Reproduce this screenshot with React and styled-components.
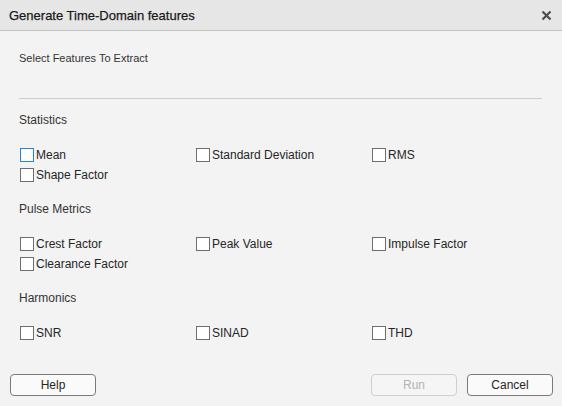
import { useState } from "react";
import styled, { createGlobalStyle } from "styled-components";

const sections = [
  {
    title: "Statistics",
    items: ["Mean", "Standard Deviation", "RMS", "Shape Factor"],
  },
  {
    title: "Pulse Metrics",
    items: ["Crest Factor", "Peak Value", "Impulse Factor", "Clearance Factor"],
  },
  {
    title: "Harmonics",
    items: ["SNR", "SINAD", "THD"],
  },
];

export default function App() {
  const [checked, setChecked] = useState({});
  const toggle = (name) => setChecked({ ...checked, [name]: !checked[name] });
  const anyChecked = Object.values(checked).some(Boolean);

  return (
    <>
      <GlobalStyle />
      <Window>
        <TitleBar>
          <Title>Generate Time-Domain features</Title>
          <CloseButton aria-label="Close">
            <svg width="11" height="11" viewBox="0 0 11 11">
              <path d="M1.5 1.5 L9.5 9.5 M9.5 1.5 L1.5 9.5" stroke="#4d4d4d" strokeWidth="2.2" />
            </svg>
          </CloseButton>
        </TitleBar>

        <Content>
          <Prompt>Select Features To Extract</Prompt>
          <Divider />

          {sections.map((section) => (
            <Section key={section.title}>
              <SectionTitle>{section.title}</SectionTitle>
              <Grid>
                {section.items.map((item) => (
                  <Option key={item}>
                    <Box
                      $focused={item === "Mean"}
                      onClick={() => toggle(item)}
                    >
                      {checked[item] && (
                        <svg width="9" height="9" viewBox="0 0 9 9">
                          <path d="M1 4.5 L3.5 7 L8 1.5" stroke="#333" strokeWidth="1.5" fill="none" />
                        </svg>
                      )}
                    </Box>
                    <OptionLabel onClick={() => toggle(item)}>{item}</OptionLabel>
                  </Option>
                ))}
              </Grid>
            </Section>
          ))}
        </Content>

        <Footer>
          <Button type="button">Help</Button>
          <FooterRight>
            <Button type="button" disabled={!anyChecked}>Run</Button>
            <Button type="button">Cancel</Button>
          </FooterRight>
        </Footer>
      </Window>
    </>
  );
}

// ─── Styled Components ───────────────────────────────────────

const GlobalStyle = createGlobalStyle`
  html, body {
    margin: 0;
    padding: 0;
    background: #f3f3f3;
  }
  body {
    font-family: "Liberation Sans", Arial, sans-serif;
  }
`;

const Window = styled.div`
  width: 562px;
  height: 406px;
  display: flex;
  flex-direction: column;
  background: #f3f3f3;
  color: #262626;
  box-sizing: border-box;
  overflow: hidden;
`;

const TitleBar = styled.div`
  height: 30px;
  flex-shrink: 0;
  display: flex;
  align-items: center;
  justify-content: space-between;
  padding: 0 8px 0 9px;
  background: #e6e6e6;
  border-bottom: 1px solid #c2c2c2;
`;

const Title = styled.span`
  font-size: 13px;
  color: #1a1a1a;
  -webkit-text-stroke: 0.25px #1a1a1a;
`;

const CloseButton = styled.button`
  display: flex;
  align-items: center;
  justify-content: center;
  width: 16px;
  height: 16px;
  padding: 0;
  margin-top: 1px;
  border: none;
  background: none;
  cursor: pointer;
`;

const Content = styled.div`
  padding: 19px 19px 0 19px;
  display: flex;
  flex-direction: column;
`;

const Prompt = styled.div`
  font-size: 11px;
  line-height: 16px;
  color: #333;
`;

const Divider = styled.div`
  height: 1px;
  margin: 32px 1px 13px 0;
  background: #cccccc;
`;

const Section = styled.div`
  display: flex;
  flex-direction: column;
  gap: 17px;
  margin-bottom: 16px;
`;

const SectionTitle = styled.div`
  font-size: 12px;
  line-height: 16px;
  color: #333;
`;

const Grid = styled.div`
  display: grid;
  grid-template-columns: 176px 176px 176px;
  grid-auto-rows: 20px;
  padding-left: 1px;
`;

const Option = styled.label`
  display: flex;
  align-items: center;
  gap: 2px;
  font-size: 12px;
  color: #262626;
  cursor: default;
`;

const Box = styled.span`
  width: 14px;
  height: 14px;
  box-sizing: border-box;
  flex-shrink: 0;
  display: flex;
  align-items: center;
  justify-content: center;
  background: #ffffff;
  border: 1px solid ${(p) => (p.$focused ? "#1f87e5" : "#6e6e6e")};
`;

const OptionLabel = styled.span`
  line-height: 16px;
`;

const Footer = styled.div`
  margin-top: auto;
  display: flex;
  justify-content: space-between;
  padding: 0 9px 10px 10px;
`;

const FooterRight = styled.div`
  display: flex;
  gap: 10px;
`;

const Button = styled.button`
  width: 86px;
  height: 22px;
  padding: 0;
  font-family: "Liberation Sans", Arial, sans-serif;
  font-size: 12px;
  color: #262626;
  background: #fafafa;
  border: 1px solid #7a7a7a;
  border-radius: 4px;
  cursor: pointer;

  &:disabled {
    color: #b3b3b3;
    border-color: #cfcfcf;
    background: #f5f5f5;
    cursor: default;
  }
`;
